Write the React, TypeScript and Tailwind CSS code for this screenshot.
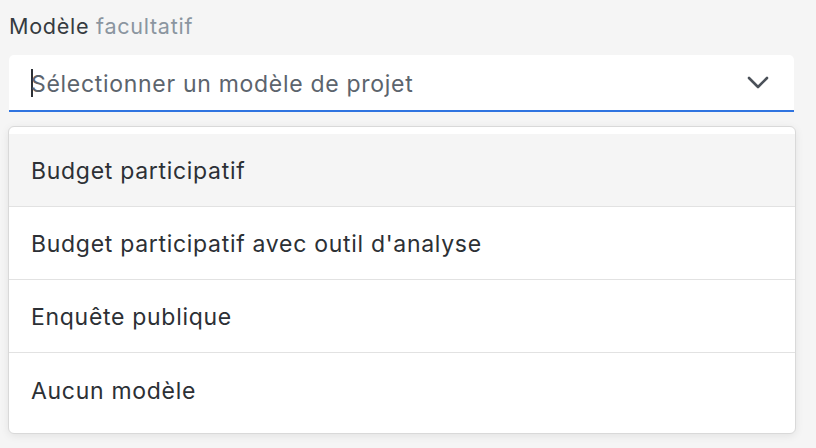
import React from 'react'

const options = [
  'Budget participatif',
  "Budget participatif avec outil d'analyse",
  'Enquête publique',
  'Aucun modèle',
]

const App = () => {
  return (
    <div
      className="w-[816px] h-[448px] bg-[#f5f5f5] pl-[9px] pt-[12px] overflow-hidden tracking-[0.7px]"
      style={{ fontFamily: 'Inter, "Noto Sans", sans-serif' }}
    >
      <div className="text-[21.6px] leading-[28px] text-[#363b40]">
        Modèle <span className="text-[#8b95a0]">facultatif</span>
      </div>

      {/* select field */}
      <div className="mt-[15px] w-[785px] h-[57px] bg-white rounded-t-[5px] border-b-2 border-[#3074e0] flex items-center pl-[22px] pr-[25px]">
        <span className="w-[2px] h-[28px] bg-[#2d3136] mr-[-2px]" />
        <span className="flex-1 text-[23px] text-[#5c646d] leading-none pt-[4px]">
          Sélectionner un modèle de projet
        </span>
        <svg width="22" height="14" viewBox="0 0 22 14" fill="none">
          <path d="M2 2 L11 11 L20 2" stroke="#4b5159" strokeWidth="2.6" strokeLinecap="round" strokeLinejoin="round" />
        </svg>
      </div>

      {/* dropdown */}
      <div className="mt-[14px] ml-[-1px] w-[788px] bg-white border border-[#d9d9d9] rounded-[6px] shadow-[0_2px_8px_rgba(0,0,0,0.08)] py-[7px]">
        {options.map((opt, i) => (
          <div
            key={opt}
            className={
              'h-[73px] flex items-center pl-[22px] pt-[3px] text-[23px] text-[#2c3035] ' +
              (i === 0 ? 'bg-[#f5f5f5] ' : '') +
              (i < options.length - 1 ? 'border-b border-[#e2e2e2]' : '')
            }
          >
            {opt}
          </div>
        ))}
      </div>
    </div>
  )
}

export default App
